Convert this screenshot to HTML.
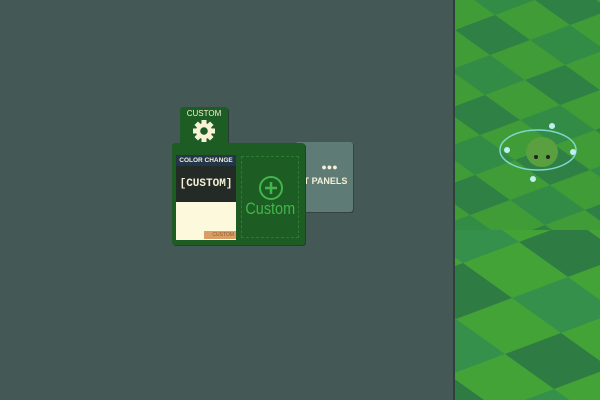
<!DOCTYPE html>
<html><head><style>
body{margin:0;width:600px;height:400px;overflow:hidden;background:#445956;font-family:"Liberation Sans",sans-serif;position:relative}
.abs{position:absolute}
</style></head><body>
<div class="abs" style="left:453px;top:0;width:2px;height:400px;background:#2f3f3c"></div>
<svg class="abs" style="left:455px;top:0" width="145" height="400">
<defs>
<pattern id="p" width="100" height="100" patternUnits="userSpaceOnUse" patternTransform="matrix(0.8,-0.3,0.7,0.5,0,30)">
<rect width="100" height="100" fill="#3f9c36"/>
<rect width="50" height="50" fill="#2f8045"/>
<rect x="50" y="50" width="50" height="50" fill="#338c46"/>
</pattern>
<pattern id="p2" width="140" height="140" patternUnits="userSpaceOnUse" patternTransform="matrix(0.8,-0.3,0.7,0.5,-20,60)">
<rect width="140" height="140" fill="#44a336"/>
<rect width="70" height="70" fill="#2e7b44"/>
<rect x="70" y="70" width="70" height="70" fill="#34904a"/>
</pattern>
</defs>
<rect width="145" height="230" fill="url(#p)"/>
<rect y="230" width="145" height="170" fill="url(#p2)"/>
<ellipse cx="83" cy="150" rx="38" ry="20" fill="none" stroke="#7fd8d0" stroke-width="1.5"/>
<ellipse cx="87" cy="152" rx="16" ry="15" fill="#5aa040"/>
<circle cx="81" cy="157" r="2" fill="#222"/><circle cx="93" cy="157" r="2" fill="#222"/>
<circle cx="97" cy="126" r="3" fill="#bfeff0"/><circle cx="52" cy="150" r="3" fill="#bfeff0"/>
<circle cx="78" cy="179" r="3" fill="#bfeff0"/><circle cx="118" cy="152" r="3" fill="#bfeff0"/>
</svg>
<div class="abs" style="left:295px;top:142px;width:58px;height:70px;background:#5e7b76;border-radius:3px;box-shadow:1px 1px 0 #34433f"></div>
<div class="abs" style="left:306px;top:163px;color:#f4f0d8;font-size:9px;width:47px;text-align:center;line-height:9px">●●●</div>
<div class="abs" style="left:298px;top:176px;color:#f4f0d8;font-size:9px;font-weight:bold;width:55px;text-align:center">T PANELS</div>
<div class="abs" style="left:180px;top:107px;width:48px;height:40px;background:#1d5c22;border-radius:3px;box-shadow:1px 1px 0 #2a3b36"></div>
<div class="abs" style="left:180px;top:109px;width:48px;text-align:center;color:#f4f0d8;font-size:8px">CUSTOM</div>
<svg class="abs" style="left:192px;top:119px" width="24" height="24" viewBox="0 0 24 24">
<g fill="#f7f2d5">
<circle cx="12" cy="12" r="8"/>
<rect x="9.5" y="1" width="5" height="22"/>
<rect x="9.5" y="1" width="5" height="22" transform="rotate(45 12 12)"/>
<rect x="9.5" y="1" width="5" height="22" transform="rotate(90 12 12)"/>
<rect x="9.5" y="1" width="5" height="22" transform="rotate(135 12 12)"/>
</g>
<circle cx="12" cy="12" r="3.8" fill="#1d5c22"/></svg>
<div class="abs" style="left:172px;top:143px;width:133px;height:102px;background:#1d5c22;border-radius:3px;box-shadow:1px 1px 0 #2a3b36"></div>
<div class="abs" style="left:176px;top:155px;width:60px;height:85px;background:#fdf9dc"></div>
<div class="abs" style="left:176px;top:155px;width:60px;height:11px;background:#233549;color:#f4f0d8;font-size:6.5px;font-weight:bold;line-height:11px;text-align:center;white-space:nowrap">COLOR CHANGE</div>
<div class="abs" style="left:176px;top:166px;width:60px;height:36px;background:#242a26;color:#f4f0d8;font-family:'Liberation Mono',monospace;font-weight:bold;font-size:11px;line-height:36px;text-align:center">[CUSTOM]</div>
<div class="abs" style="left:204px;top:231px;width:32px;height:8px;background:#d99e64;color:#8a5a30;font-size:5px;line-height:8px;text-align:right;padding-right:2px;box-sizing:border-box">CUSTOM</div>
<div class="abs" style="left:241px;top:156px;width:58px;height:82px;border:1px dashed #2e7b35;box-sizing:border-box"></div>
<svg class="abs" style="left:258px;top:175px" width="26" height="26"><circle cx="13" cy="13" r="11" fill="none" stroke="#40b74a" stroke-width="2"/><path d="M13 7v12M7 13h12" stroke="#40b74a" stroke-width="2.5"/></svg>
<div class="abs" style="left:241px;top:199px;width:58px;text-align:center;color:#40b74a;font-size:17px;transform:scaleX(0.85)">Custom</div>
</body></html>
